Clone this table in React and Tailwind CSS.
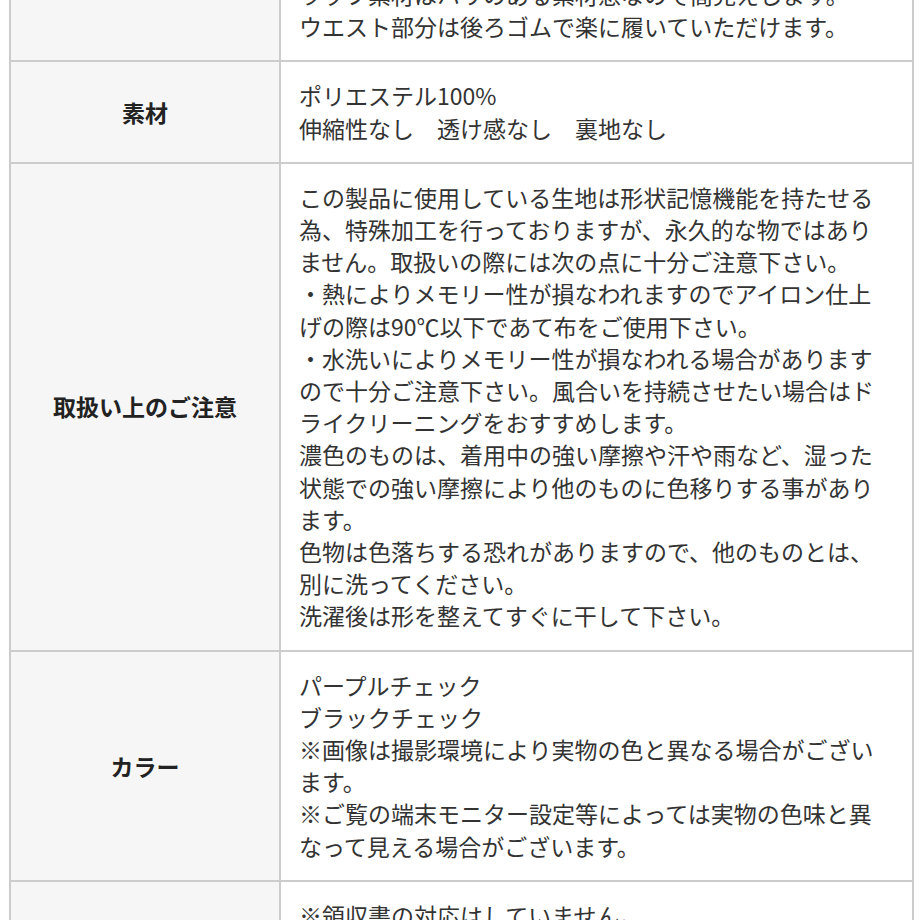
const ROWS = [
  {
    label: '',
    lines: [
      'ラッフ素材はハリのある素材感なので高見えします。',
      'ウエスト部分は後ろゴムで楽に履いていただけます。',
    ],
  },
  {
    label: '素材',
    lines: ['ポリエステル100%', '伸縮性なし　透け感なし　裏地なし'],
  },
  {
    label: '取扱い上のご注意',
    lines: [
      'この製品に使用している生地は形状記憶機能を持たせる',
      '為、特殊加工を行っておりますが、永久的な物ではあり',
      'ません。取扱いの際には次の点に十分ご注意下さい。',
      '・熱によりメモリー性が損なわれますのでアイロン仕上',
      'げの際は90℃以下であて布をご使用下さい。',
      '・水洗いによりメモリー性が損なわれる場合があります',
      'ので十分ご注意下さい。風合いを持続させたい場合はド',
      'ライクリーニングをおすすめします。',
      '濃色のものは、着用中の強い摩擦や汗や雨など、湿った',
      '状態での強い摩擦により他のものに色移りする事があり',
      'ます。',
      '色物は色落ちする恐れがありますので、他のものとは、',
      '別に洗ってください。',
      '洗濯後は形を整えてすぐに干して下さい。',
    ],
  },
  {
    label: 'カラー',
    lines: [
      'パープルチェック',
      'ブラックチェック',
      '※画像は撮影環境により実物の色と異なる場合がござい',
      'ます。',
      '※ご覧の端末モニター設定等によっては実物の色味と異',
      'なって見える場合がございます。',
    ],
  },
  {
    label: '',
    lines: ['※領収書の対応はしていません。'],
    tall: true,
  },
];

export default function App() {
  return (
    <div
      className="h-[920px] overflow-hidden bg-white"
      style={{ fontFamily: '"Noto Sans CJK JP", "Noto Sans", sans-serif' }}
    >
      <div className="-mt-[39px] ml-[9px] w-[905px] border-x-2 border-[#cccccc]">
        {ROWS.map((row, i) => (
          <div
            key={i}
            className={`grid grid-cols-[270px_1fr] ${i > 0 ? 'border-t-2 border-[#cccccc]' : ''} ${row.tall ? 'min-h-[240px]' : ''}`}
          >
            <div className="flex items-center justify-center border-r-2 border-[#cccccc] bg-[#f6f6f6] text-[23px] font-bold text-[#222]">
              {row.label}
            </div>
            <div className="px-[18px] pb-[18px] pt-[17px] text-[23px] leading-[32.2px] text-[#333]">
              {row.lines.map((line, j) => (
                <div key={j} className="whitespace-nowrap">
                  {line}
                </div>
              ))}
            </div>
          </div>
        ))}
      </div>
    </div>
  );
}
